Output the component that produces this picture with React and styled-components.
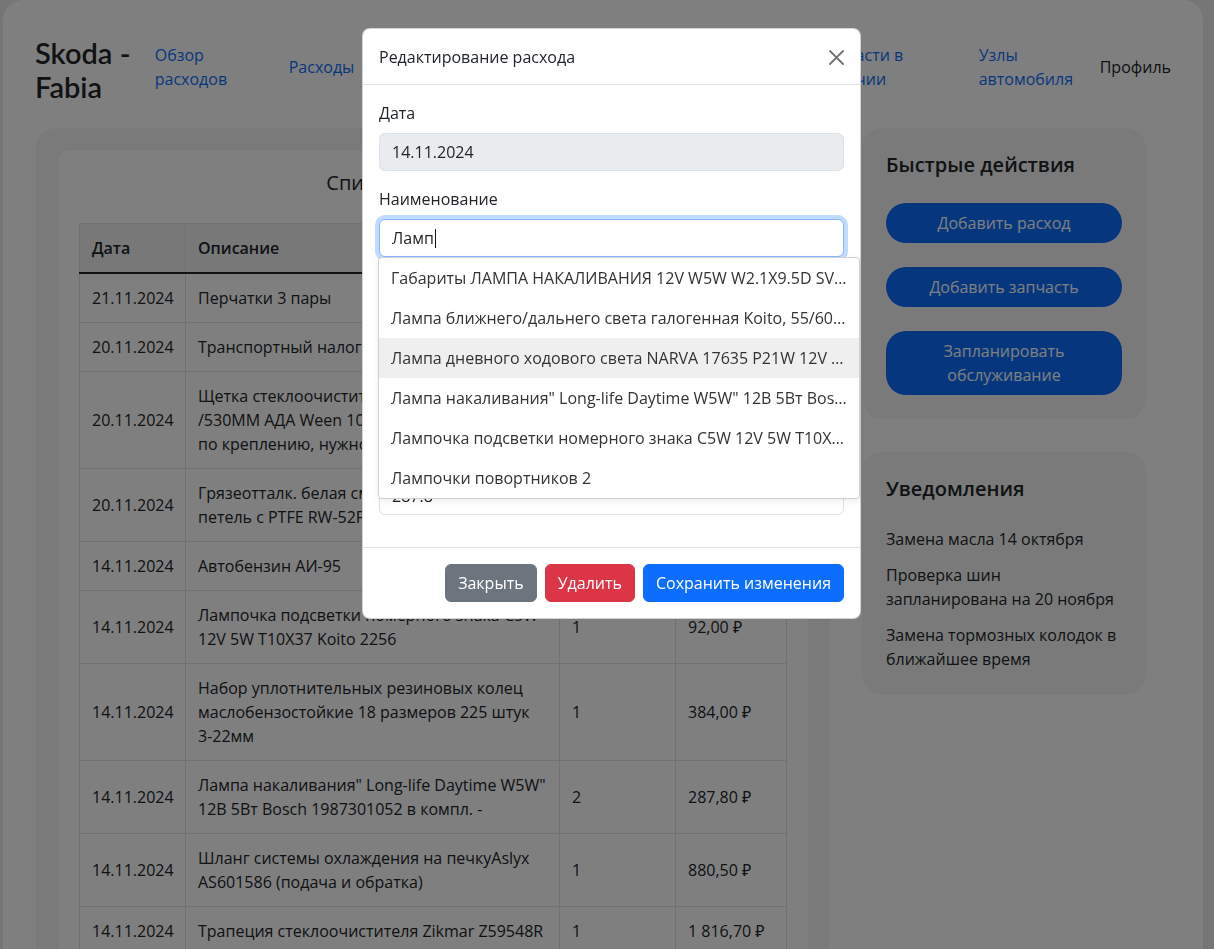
import React from 'react';
import styled, { createGlobalStyle } from 'styled-components';

const GlobalStyle = createGlobalStyle`
  html, body { margin: 0; padding: 0; }
  body {
    background: #ececec;
    font-family: "Open Sans", "Noto Sans", sans-serif;
    color: #212529;
    font-size: 16px;
    line-height: 1.5;
    overflow: hidden;
  }
  * { box-sizing: border-box; }
`;

const Page = styled.div`
  padding: 0 11px 0 3px;
  height: 949px;
  overflow: hidden;
`;

const Container = styled.div`
  background: #fff;
  border-radius: 20px;
  padding: 32px 32px 0;
  min-height: 1000px;
`;

const Header = styled.header`
  display: flex;
  align-items: center;
`;

const Brand = styled.div`
  font-family: Lato, "Open Sans", sans-serif;
  font-weight: 600;
  font-size: 29px;
  line-height: 34px;
  padding-top: 4px;
  width: 96px;
  white-space: nowrap;
  color: #212529;
`;

const Nav = styled.nav`
  display: flex;
  align-items: center;
  gap: 61px;
  margin-left: 24px;
  margin-top: -2px;
`;

const NavLink = styled.a`
  display: block;
  width: ${p => p.$w}px;
  color: #0d6efd;
  text-decoration: none;
  line-height: 24px;
`;

const Profile = styled.div`
  margin-left: 27px;
  margin-top: -2px;
  color: #212529;
`;

const Main = styled.div`
  display: grid;
  grid-template-columns: 794px 284px;
  gap: 32px;
  margin: 24px 0 0 1px;
  align-items: start;
`;

const Panel = styled.section`
  background: #f5f5f5;
  border-radius: 20px;
  padding: 22px;
`;

const ListCard = styled.div`
  background: #fff;
  border-radius: 12px;
  padding: 21px;
  box-shadow: 0 0 2px rgba(0, 0, 0, 0.06);
`;

const ListTitle = styled.h2`
  margin: 0 0 28px;
  text-align: center;
  font-size: 20px;
  font-weight: 500;
  line-height: 24px;
`;

const Table = styled.table`
  width: 100%;
  border-collapse: collapse;
  table-layout: fixed;
`;

const Th = styled.th`
  background: #f1f1f1;
  text-align: left;
  font-weight: 600;
  padding: 12px;
  border: 1px solid #dee2e6;
  border-bottom: 2px solid #212529;
  line-height: 24px;
`;

const Td = styled.td`
  padding: 12px;
  border: 1px solid #dee2e6;
  vertical-align: middle;
  line-height: 24px;
`;

const Side = styled.aside`
  display: flex;
  flex-direction: column;
  gap: 33px;
`;

const SideCard = styled.div`
  background: #f5f5f5;
  border-radius: 20px;
  padding: 24px;
`;

const SideTitle = styled.h3`
  margin: 1px 0 ${p => (p.$flush ? 0 : 26)}px;
  font-size: 20px;
  font-weight: 600;
  line-height: 24px;
`;

const Actions = styled.div`
  display: flex;
  flex-direction: column;
  gap: 24px;
`;

const PillButton = styled.button`
  display: block;
  width: 100%;
  background: #0d6efd;
  color: #fff;
  border: none;
  border-radius: 20px;
  padding: 8px 16px;
  font: inherit;
  line-height: 24px;
  text-align: center;
`;

const Notes = styled.div`
  display: flex;
  flex-direction: column;
  gap: 12px;
  margin-top: 26px;
`;

const Note = styled.p`
  margin: 0;
  line-height: 24px;
`;

/* Modal */
const Backdrop = styled.div`
  position: fixed;
  inset: 0;
  background: rgba(0, 0, 0, 0.5);
  z-index: 10;
`;

const Dialog = styled.div`
  margin: 28px 0 0 362px;
  width: 499px;
  background: #fff;
  border: 1px solid rgba(0, 0, 0, 0.175);
  border-radius: 8px;
`;

const DialogHeader = styled.div`
  display: flex;
  align-items: center;
  justify-content: space-between;
  padding: 16px 16px 15px;
  border-bottom: 1px solid #dee2e6;
`;

const DialogTitle = styled.div`
  font-size: 16px;
  line-height: 24px;
  color: #212529;
`;

const CloseButton = styled.button`
  width: 16px;
  height: 16px;
  padding: 0;
  border: none;
  background: transparent;
  opacity: 0.55;
  display: flex;
  align-items: center;
  justify-content: center;
`;

const DialogBody = styled.div`
  padding: 16px;
`;

const Group = styled.div`
  position: relative;
  margin-bottom: 16px;
`;

const Label = styled.label`
  display: block;
  margin-bottom: 8px;
  line-height: 24px;
`;

const Field = styled.div`
  height: 38px;
  padding: 6px 12px;
  border: 1px solid ${p => (p.$focused ? '#86b7fe' : '#dee2e6')};
  border-radius: 6px;
  background: ${p => (p.$disabled ? '#e9ecef' : '#fff')};
  line-height: 24px;
  color: #212529;
  box-shadow: ${p => (p.$focused ? '0 0 0 4px rgba(13,110,253,.25)' : 'none')};
  display: flex;
  align-items: center;
`;

const Caret = styled.span`
  display: inline-block;
  width: 1px;
  height: 19px;
  background: #111;
  margin-left: 1px;
`;

const Suggestions = styled.div`
  position: absolute;
  top: 100%;
  left: -1px;
  width: 482px;
  background: #fff;
  border: 1px solid #d0d0d0;
  border-radius: 4px;
  box-shadow: 0 2px 6px rgba(0, 0, 0, 0.08);
  z-index: 5;
`;

const Suggestion = styled.div`
  padding: 8px 12px;
  line-height: 24px;
  white-space: nowrap;
  overflow: hidden;
  text-overflow: ellipsis;
  color: #333;
  background: ${p => (p.$active ? '#efefef' : 'transparent')};
`;

const DialogFooter = styled.div`
  display: flex;
  justify-content: flex-end;
  gap: 8px;
  padding: 16px;
  border-top: 1px solid #dee2e6;
`;

const Btn = styled.button`
  font: inherit;
  line-height: 24px;
  padding: 6px 12px;
  border-radius: 6px;
  border: 1px solid ${p => p.$bg};
  background: ${p => p.$bg};
  color: #fff;
`;

const navItems = [
  { t: 'Обзор расходов', w: 73 },
  { t: 'Расходы', w: 65 },
  { t: 'Обслуживание', w: 140 },
  { t: 'Статистика', w: 141 },
  { t: 'Запчасти в наличии', w: 100 },
  { t: 'Узлы автомобиля', w: 94 },
];

const rows = [
  ['21.11.2024', 'Перчатки 3 пары', '1', '350,00 ₽'],
  ['20.11.2024', 'Транспортный налог', '1', '1 425,00 ₽'],
  ['20.11.2024', 'Щетка стеклоочистителя комплект 650ММ /530ММ АДА Ween 1021-0115 не подходят по креплению, нужно менять', '1', '1 290,00 ₽'],
  ['20.11.2024', 'Грязеотталк. белая смазка для дверных петель с PTFE RW-52F 210мл', '1', '512,00 ₽'],
  ['14.11.2024', 'Автобензин АИ-95', '30', '1 650,00 ₽'],
  ['14.11.2024', 'Лампочка подсветки номерного знака C5W 12V 5W T10X37 Koito 2256', '1', '92,00 ₽'],
  ['14.11.2024', 'Набор уплотнительных резиновых колец маслобензостойкие 18 размеров 225 штук 3-22мм', '1', '384,00 ₽'],
  ['14.11.2024', 'Лампа накаливания" Long-life Daytime W5W" 12В 5Вт Bosch 1987301052 в компл. -', '2', '287,80 ₽'],
  ['14.11.2024', 'Шланг системы охлаждения на печкуAslyx AS601586 (подача и обратка)', '1', '880,50 ₽'],
  ['14.11.2024', 'Трапеция стеклоочистителя Zikmar Z59548R', '1', '1 816,70 ₽'],
];

const suggestions = [
  'Габариты ЛАМПА НАКАЛИВАНИЯ 12V W5W W2.1X9.5D SVS 0200110000',
  'Лампа ближнего/дальнего света галогенная Koito, 55/60W H4',
  'Лампа дневного ходового света NARVA 17635 P21W 12V 21W',
  'Лампа накаливания" Long-life Daytime W5W" 12В 5Вт Bosch 1987301052',
  'Лампочка подсветки номерного знака C5W 12V 5W T10X37 Koito 2256',
  'Лампочки повортников 2',
];

export default function App() {
  return (
    <>
      <GlobalStyle />
      <Page>
        <Container>
          <Header>
            <Brand>
              Skoda -<br />
              Fabia
            </Brand>
            <Nav>
              {navItems.map(n => (
                <NavLink key={n.t} href="#" $w={n.w}>
                  {n.t}
                </NavLink>
              ))}
            </Nav>
            <Profile>Профиль</Profile>
          </Header>
          <Main>
            <Panel>
              <ListCard>
                <ListTitle>Список всех расходов</ListTitle>
                <Table>
                  <colgroup>
                    <col style={{ width: 106 }} />
                    <col style={{ width: 374 }} />
                    <col style={{ width: 116 }} />
                    <col style={{ width: 111 }} />
                  </colgroup>
                  <thead>
                    <tr>
                      <Th>Дата</Th>
                      <Th>Описание</Th>
                      <Th>Кол-во</Th>
                      <Th>Сумма</Th>
                    </tr>
                  </thead>
                  <tbody>
                    {rows.map((r, i) => (
                      <tr key={i}>
                        {r.map((c, j) => (
                          <Td key={j}>{c}</Td>
                        ))}
                      </tr>
                    ))}
                  </tbody>
                </Table>
              </ListCard>
            </Panel>
            <Side>
              <SideCard>
                <SideTitle>Быстрые действия</SideTitle>
                <Actions>
                  <PillButton>Добавить расход</PillButton>
                  <PillButton>Добавить запчасть</PillButton>
                  <PillButton>Запланировать обслуживание</PillButton>
                </Actions>
              </SideCard>
              <SideCard>
                <SideTitle $flush>Уведомления</SideTitle>
                <Notes>
                  <Note>Замена масла 14 октября</Note>
                  <Note>Проверка шин запланирована на 20 ноября</Note>
                  <Note>Замена тормозных колодок в ближайшее время</Note>
                </Notes>
              </SideCard>
            </Side>
          </Main>
        </Container>
      </Page>

      <Backdrop>
        <Dialog>
          <DialogHeader>
            <DialogTitle>Редактирование расхода</DialogTitle>
            <CloseButton aria-label="Закрыть">
              <svg width="15" height="15" viewBox="0 0 15 15">
                <path d="M1 1 L14 14 M14 1 L1 14" stroke="#000" strokeWidth="1.8" strokeLinecap="round" />
              </svg>
            </CloseButton>
          </DialogHeader>
          <DialogBody>
            <Group>
              <Label>Дата</Label>
              <Field $disabled>14.11.2024</Field>
            </Group>
            <Group>
              <Label>Наименование</Label>
              <Field $focused>
                Ламп
                <Caret />
              </Field>
              <Suggestions>
                {suggestions.map((s, i) => (
                  <Suggestion key={i} $active={i === 2}>
                    {s}
                  </Suggestion>
                ))}
              </Suggestions>
            </Group>
            <Group>
              <Label>Узел автомобиля</Label>
              <Field>Электрика</Field>
            </Group>
            <Group>
              <Label>Количество</Label>
              <Field>2</Field>
            </Group>
            <Group>
              <Label>Сумма</Label>
              <Field>287.8</Field>
            </Group>
          </DialogBody>
          <DialogFooter>
            <Btn $bg="#6c757d">Закрыть</Btn>
            <Btn $bg="#dc3545">Удалить</Btn>
            <Btn $bg="#0d6efd">Сохранить изменения</Btn>
          </DialogFooter>
        </Dialog>
      </Backdrop>
    </>
  );
}
